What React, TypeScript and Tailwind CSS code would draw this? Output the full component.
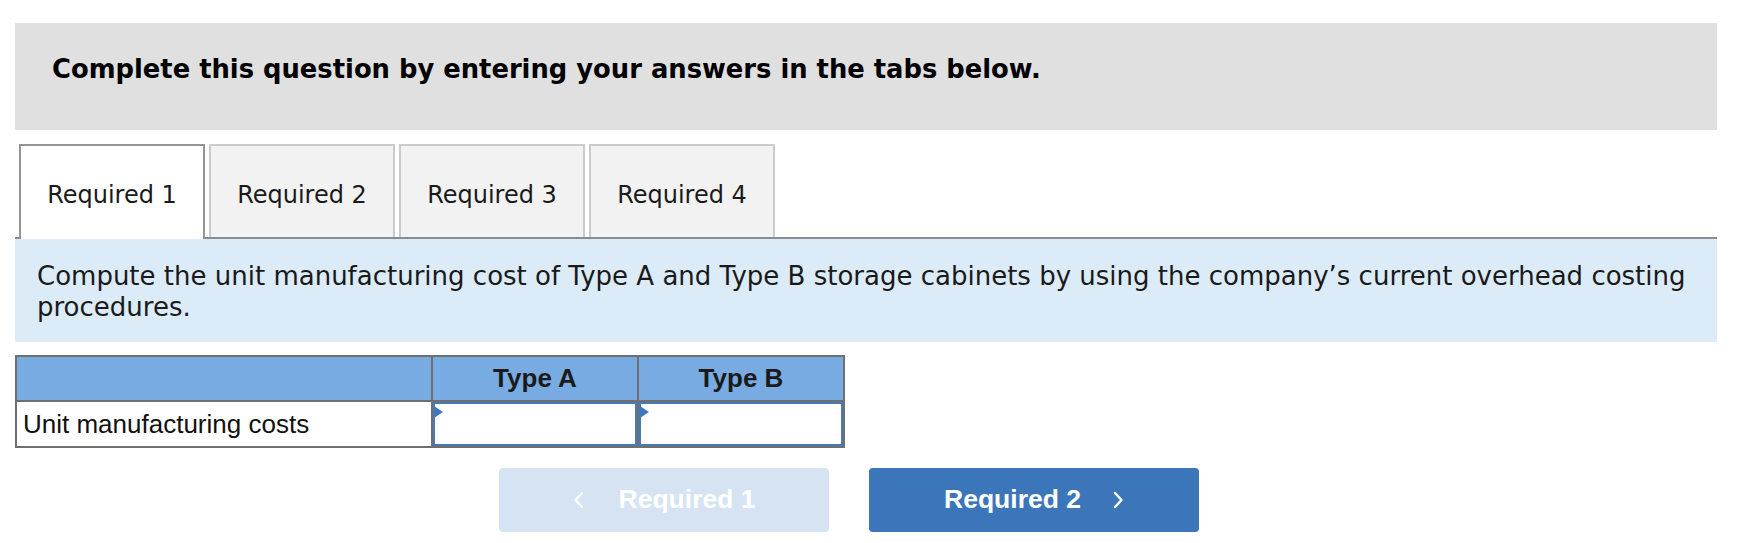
import React from "react";

function Chevron({ dir }: { dir: "left" | "right" }) {
  return (
    <svg width="12" height="18" viewBox="0 0 12 18" fill="none">
      {dir === "right" ? (
        <path d="M3 2 L9.5 9 L3 16" stroke="white" strokeWidth="2.4" strokeLinecap="round" strokeLinejoin="round" />
      ) : (
        <path d="M9 2 L2.5 9 L9 16" stroke="white" strokeWidth="2.4" strokeLinecap="round" strokeLinejoin="round" />
      )}
    </svg>
  );
}

function InputCell({ last }: { last?: boolean }) {
  return (
    <div className={`relative h-full ${last ? "flex-1" : "w-[206px] border-r-2 border-[#6f6f6f]"}`}>
      <div className="h-full w-full border-2 border-[#4a7ab5] bg-white" />
      <svg className="absolute left-[1px] top-[4px]" width="9" height="12" viewBox="0 0 9 12">
        <path d="M0 0 L9 6 L0 12 Z" fill="#3f78c0" />
      </svg>
    </div>
  );
}

export default function App() {
  const tabs = ["Required 1", "Required 2", "Required 3", "Required 4"];
  return (
    <div className="w-[1737px] h-[543px] bg-white overflow-hidden font-['DejaVu_Sans',sans-serif]">
      <div className="ml-[15px] mt-[23px] w-[1702px] h-[107px] bg-[#e0e0e0] pl-[37px] pt-[31px]">
        <p className="font-bold text-[25.8px] leading-[30px] text-black">
          Complete this question by entering your answers in the tabs below.
        </p>
      </div>

      <div className="ml-[15px] mt-[14px] w-[1702px] h-[95px] flex items-end gap-[4px] pl-[4px] border-b-2 border-[#8c8c8c]">
        {tabs.map((t, i) =>
          i === 0 ? (
            <div
              key={t}
              className="w-[186px] h-[95px] -mb-[2px] pt-[4px] border-2 border-b-0 border-[#949494] bg-white flex items-center justify-center text-[24px] text-[#1a1a1a]"
            >
              {t}
            </div>
          ) : (
            <div
              key={t}
              className="w-[186px] h-[93px] pt-[6px] border-2 border-b-0 border-[#cbcbcb] bg-[#f2f2f2] flex items-center justify-center text-[24px] text-[#1a1a1a]"
            >
              {t}
            </div>
          )
        )}
      </div>

      <div className="ml-[15px] w-[1702px] h-[103px] bg-[#dcebf8] pl-[22px] pt-[22px] text-[26px] leading-[31px] text-[#1a1a1a]">
        Compute the unit manufacturing cost of Type A and Type B storage cabinets by using the company’s current overhead costing
        <br />
        procedures.
      </div>

      <div className="ml-[15px] mt-[13px] w-[830px] border-2 border-[#6f6f6f] font-['Liberation_Sans',Arial,sans-serif]">
        <div className="flex h-[45px] bg-[#77abe2] border-b-2 border-[#6f6f6f]">
          <div className="w-[416px] border-r-2 border-[#6f6f6f]" />
          <div className="w-[206px] border-r-2 border-[#6f6f6f] flex items-center justify-center text-[26px] font-bold text-[#1a1a1a]">
            Type A
          </div>
          <div className="flex-1 flex items-center justify-center text-[26px] font-bold text-[#1a1a1a]">
            Type B
          </div>
        </div>
        <div className="flex h-[44px] bg-white">
          <div className="w-[416px] border-r-2 border-[#6f6f6f] flex items-center pl-[6px] text-[26px] text-[#111]">
            Unit manufacturing costs
          </div>
          <InputCell />
          <InputCell last />
        </div>
      </div>

      <div className="ml-[499px] mt-[20px] flex gap-[40px] font-['Liberation_Sans',Arial,sans-serif]">
        <div className="w-[330px] h-[64px] rounded-[4px] bg-[#d6e3f2] flex items-center justify-center gap-[34px] text-white font-bold text-[26.5px]">
          <Chevron dir="left" />
          <span>Required 1</span>
        </div>
        <div className="w-[330px] h-[64px] rounded-[4px] bg-[#3b76ba] flex items-center justify-center gap-[31px] text-white font-bold text-[26.5px]">
          <span>Required 2</span>
          <Chevron dir="right" />
        </div>
      </div>
    </div>
  );
}
